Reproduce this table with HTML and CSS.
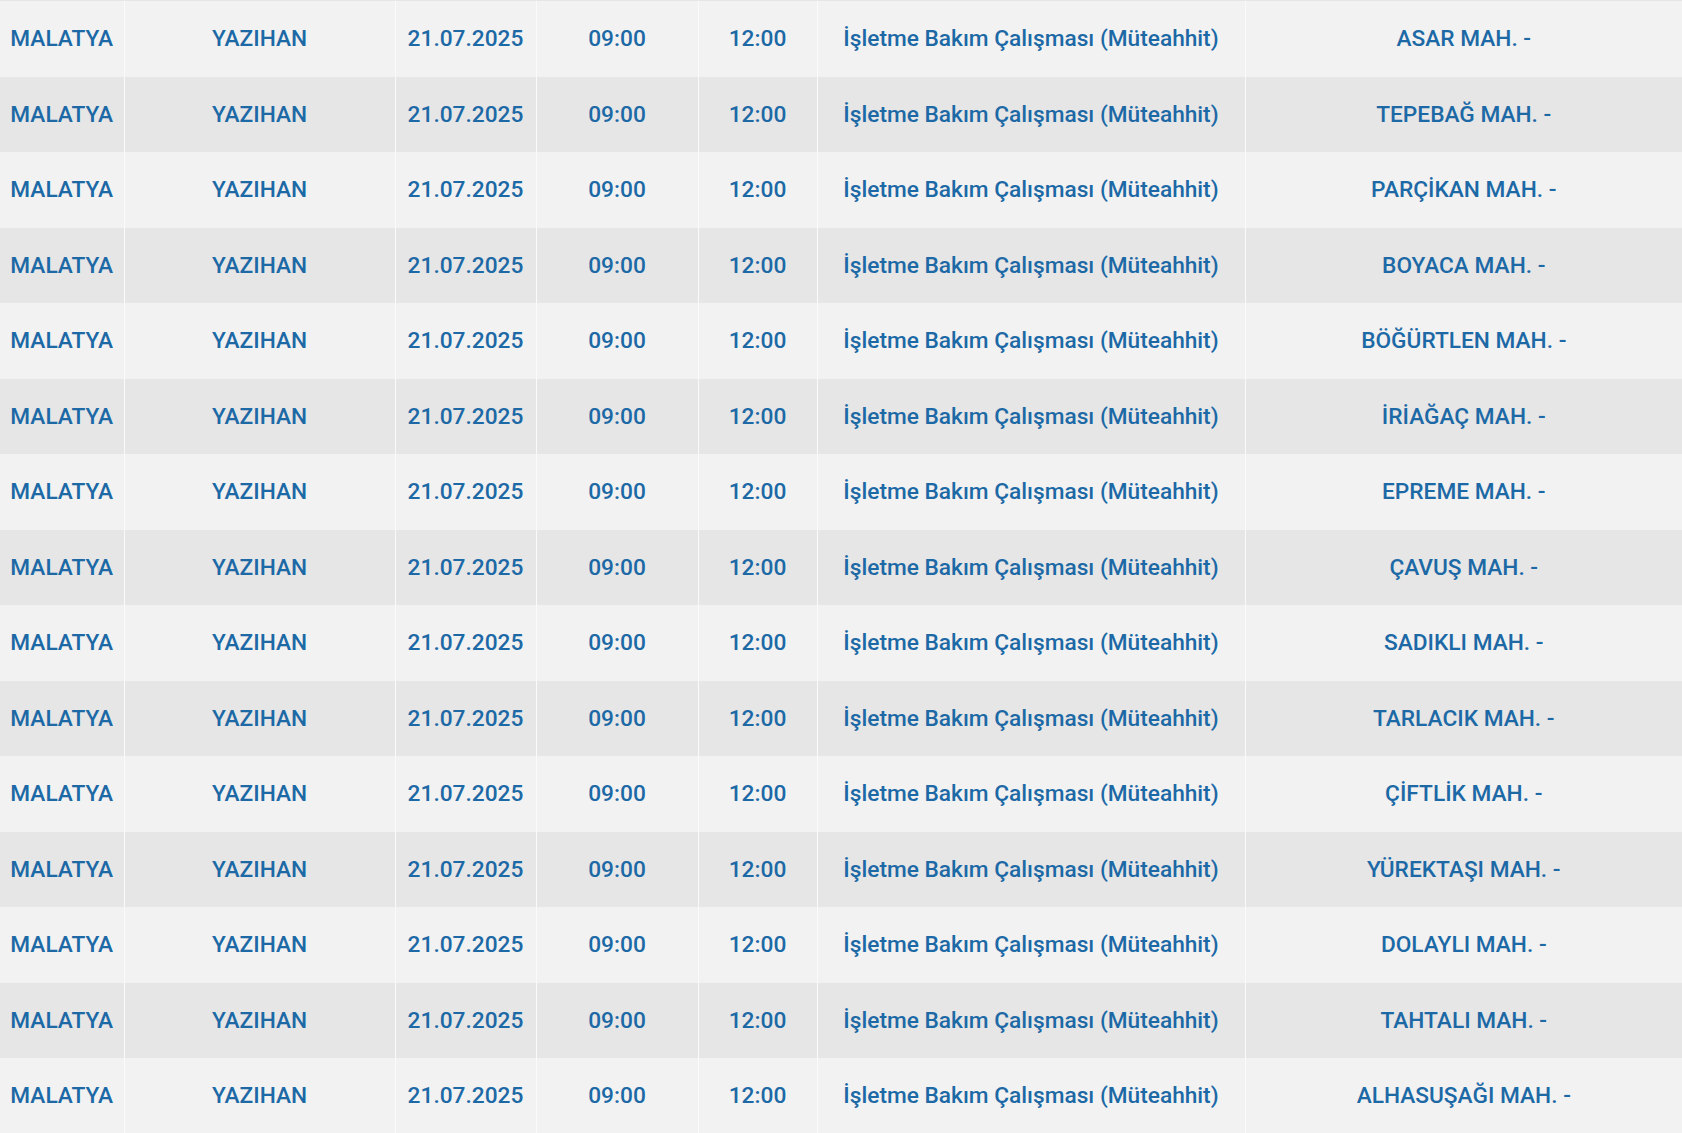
FILE: index.html
```html
<!DOCTYPE html>
<html lang="tr">
<head>
<meta charset="utf-8">
<title>Planlı Kesintiler</title>
<link rel="stylesheet" href="styles.css">
</head>
<body>
<table class="outages">
<colgroup>
<col class="c-il"><col class="c-ilce"><col class="c-tarih"><col class="c-bas"><col class="c-bit"><col class="c-neden"><col class="c-yer">
</colgroup>
<tbody>
<tr><td>MALATYA</td><td>YAZIHAN</td><td>21.07.2025</td><td>09:00</td><td>12:00</td><td>İşletme Bakım Çalışması (Müteahhit)</td><td>ASAR MAH. -</td></tr>
<tr><td>MALATYA</td><td>YAZIHAN</td><td>21.07.2025</td><td>09:00</td><td>12:00</td><td>İşletme Bakım Çalışması (Müteahhit)</td><td>TEPEBAĞ MAH. -</td></tr>
<tr><td>MALATYA</td><td>YAZIHAN</td><td>21.07.2025</td><td>09:00</td><td>12:00</td><td>İşletme Bakım Çalışması (Müteahhit)</td><td>PARÇİKAN MAH. -</td></tr>
<tr><td>MALATYA</td><td>YAZIHAN</td><td>21.07.2025</td><td>09:00</td><td>12:00</td><td>İşletme Bakım Çalışması (Müteahhit)</td><td>BOYACA MAH. -</td></tr>
<tr><td>MALATYA</td><td>YAZIHAN</td><td>21.07.2025</td><td>09:00</td><td>12:00</td><td>İşletme Bakım Çalışması (Müteahhit)</td><td>BÖĞÜRTLEN MAH. -</td></tr>
<tr><td>MALATYA</td><td>YAZIHAN</td><td>21.07.2025</td><td>09:00</td><td>12:00</td><td>İşletme Bakım Çalışması (Müteahhit)</td><td>İRİAĞAÇ MAH. -</td></tr>
<tr><td>MALATYA</td><td>YAZIHAN</td><td>21.07.2025</td><td>09:00</td><td>12:00</td><td>İşletme Bakım Çalışması (Müteahhit)</td><td>EPREME MAH. -</td></tr>
<tr><td>MALATYA</td><td>YAZIHAN</td><td>21.07.2025</td><td>09:00</td><td>12:00</td><td>İşletme Bakım Çalışması (Müteahhit)</td><td>ÇAVUŞ MAH. -</td></tr>
<tr><td>MALATYA</td><td>YAZIHAN</td><td>21.07.2025</td><td>09:00</td><td>12:00</td><td>İşletme Bakım Çalışması (Müteahhit)</td><td>SADIKLI MAH. -</td></tr>
<tr><td>MALATYA</td><td>YAZIHAN</td><td>21.07.2025</td><td>09:00</td><td>12:00</td><td>İşletme Bakım Çalışması (Müteahhit)</td><td>TARLACIK MAH. -</td></tr>
<tr><td>MALATYA</td><td>YAZIHAN</td><td>21.07.2025</td><td>09:00</td><td>12:00</td><td>İşletme Bakım Çalışması (Müteahhit)</td><td>ÇİFTLİK MAH. -</td></tr>
<tr><td>MALATYA</td><td>YAZIHAN</td><td>21.07.2025</td><td>09:00</td><td>12:00</td><td>İşletme Bakım Çalışması (Müteahhit)</td><td>YÜREKTAŞI MAH. -</td></tr>
<tr><td>MALATYA</td><td>YAZIHAN</td><td>21.07.2025</td><td>09:00</td><td>12:00</td><td>İşletme Bakım Çalışması (Müteahhit)</td><td>DOLAYLI MAH. -</td></tr>
<tr><td>MALATYA</td><td>YAZIHAN</td><td>21.07.2025</td><td>09:00</td><td>12:00</td><td>İşletme Bakım Çalışması (Müteahhit)</td><td>TAHTALI MAH. -</td></tr>
<tr><td>MALATYA</td><td>YAZIHAN</td><td>21.07.2025</td><td>09:00</td><td>12:00</td><td>İşletme Bakım Çalışması (Müteahhit)</td><td>ALHASUŞAĞI MAH. -</td></tr>
</tbody>
</table>
</body>
</html>
```
FILE: styles.css
```css
html, body {
  margin: 0;
  padding: 0;
  background: #f2f2f2;
  overflow: hidden;
}

body {
  font-family: Roboto, "Liberation Sans", sans-serif;
  border-top: 1px solid #e6e6e6;
}

.outages {
  width: 1682px;
  table-layout: fixed;
  border-collapse: collapse;
  border-spacing: 0;
}

.c-il { width: 124px; }
.c-ilce { width: 271px; }
.c-tarih { width: 141px; }
.c-bas { width: 162px; }
.c-bit { width: 119px; }
.c-neden { width: 428px; }
.c-yer { width: 437px; }

.outages tr {
  height: 75.5px;
  background: #f2f2f2;
}

.outages tr:nth-child(even) {
  background: #e6e6e6;
}

.outages td {
  padding: 0 4px;
  text-align: center;
  vertical-align: middle;
  font-size: 22.7px;
  font-weight: 500;
  color: #1c69a6;
  white-space: nowrap;
  border-left: 1px solid #fafafa;
}

.outages td:first-child {
  border-left: none;
}
```
